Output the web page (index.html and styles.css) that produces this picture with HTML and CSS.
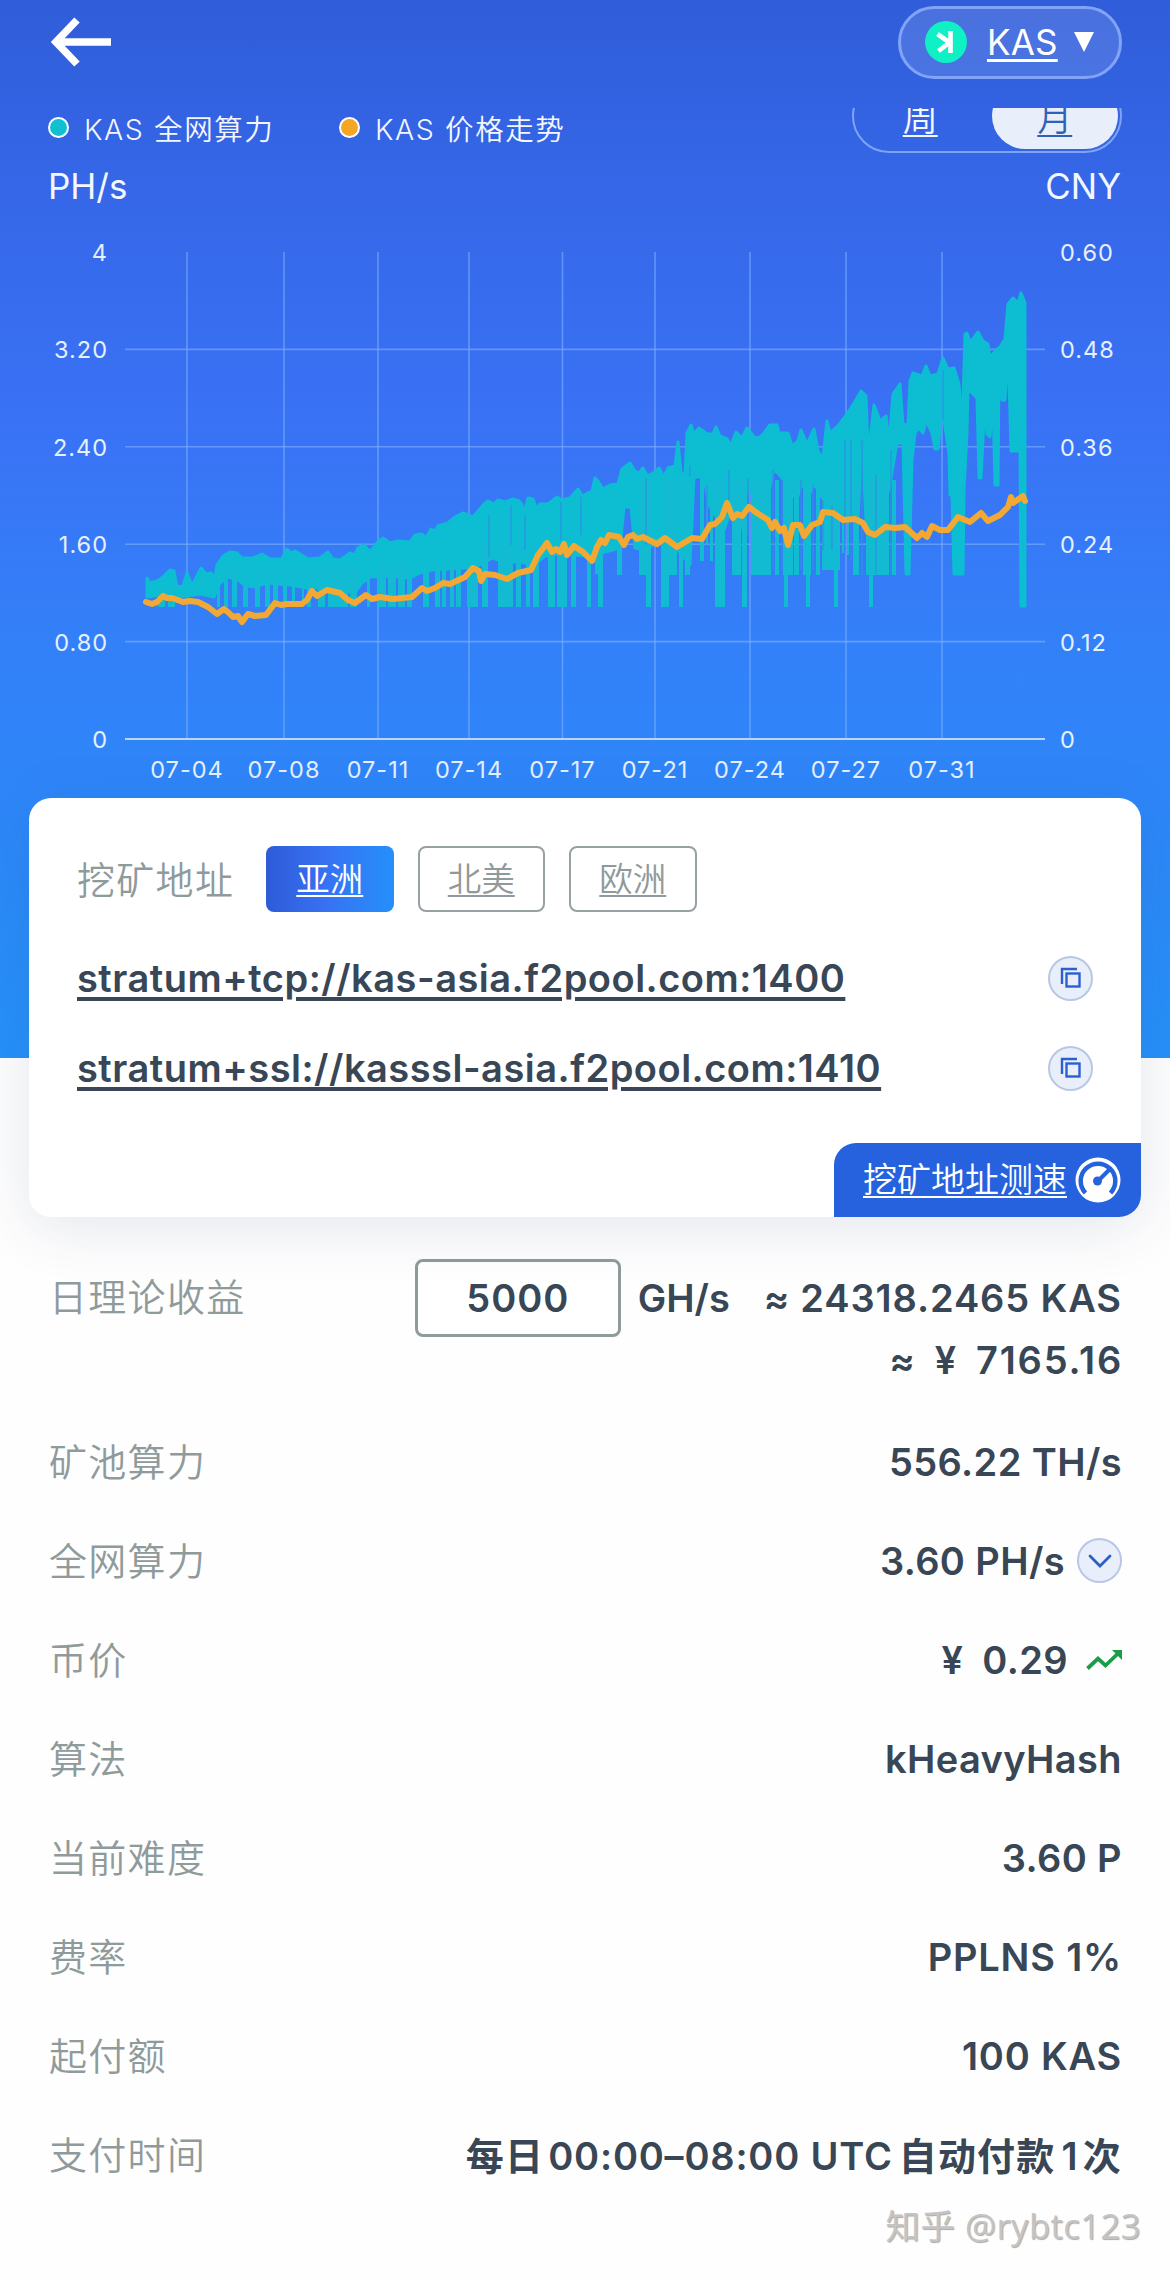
FILE: index.html
```html
<!DOCTYPE html>
<html lang="zh-CN">
<head>
  <meta charset="UTF-8">
  <meta name="viewport" content="width=device-width, initial-scale=1.0">
  <title>KAS 矿池</title>
  <link rel="stylesheet" href="styles.css">
</head>
<body>
  <header class="topbar">
    <svg class="back" width="62" height="50" viewBox="0 0 62 50" fill="none" stroke="#fff" stroke-width="7.5">
      <path d="M61 25H7M27 3L6 25l21 22"/>
    </svg>
    <div class="coin-select">
      <svg width="42" height="42" viewBox="0 0 42 42">
        <circle cx="21" cy="21" r="21" fill="#0ff0c4"/>
        <path d="M25.5 10v22M12.5 13l12 8.500-11 8.500" fill="none" stroke="#fff" stroke-width="4.600"/>
      </svg>
      <a class="coin-name">KAS</a>
      <span class="caret"></span>
    </div>
  </header>

  <div class="legend-row">
    <div class="legend"><span class="dot teal"></span>KAS 全网算力</div>
    <div class="legend"><span class="dot orange"></span>KAS 价格走势</div>
    <div class="period-clip">
      <div class="period">
        <a>周</a>
        <a class="active">月</a>
      </div>
    </div>
  </div>

  <div class="units"><span>PH/s</span><span>CNY</span></div>

  <svg class="chart" id="chart" width="1170" height="570" viewBox="0 220 1170 570">
    <g id="grid"></g>
    <path id="hashArea" class="hash-area"/>
    <path id="hashSpikes" class="hash-spikes"/>
    <path id="hashGaps" class="hash-gaps"/>
    <polyline id="price" class="price"/>
  </svg>

  <div class="card">
    <div class="regions">
      <span class="regions-label">挖矿地址</span>
      <a class="region active">亚洲</a>
      <a class="region">北美</a>
      <a class="region">欧洲</a>
    </div>
    <div class="address">
      <a>stratum+tcp://kas-asia.f2pool.com:1400</a>
      <span class="round"><svg width="22" height="22" viewBox="0 0 22 22" fill="none" stroke="#2c5fd0" stroke-width="2.400"><path d="M2 17V2h15"/><rect x="6.500" y="6.500" width="13" height="13"/></svg></span>
    </div>
    <div class="address">
      <a>stratum+ssl://kasssl-asia.f2pool.com:1410</a>
      <span class="round"><svg width="22" height="22" viewBox="0 0 22 22" fill="none" stroke="#2c5fd0" stroke-width="2.400"><path d="M2 17V2h15"/><rect x="6.500" y="6.500" width="13" height="13"/></svg></span>
    </div>
    <div class="speed">
      <a>挖矿地址测速</a>
      <svg width="46" height="46" viewBox="0 0 46 46">
        <circle cx="23" cy="23" r="22.500" fill="#fff"/>
        <path d="M10.500 36A17.300 17.300 0 1 1 35.500 36" fill="none" stroke="#2662de" stroke-width="4.500"/>
        <path d="M23 24L36 11" stroke="#2662de" stroke-width="4"/>
        <circle cx="22.500" cy="24" r="4.500" fill="#2662de"/>
      </svg>
    </div>
  </div>

  <div class="stats">
    <div class="stat income">
      <span class="label">日理论收益</span>
      <div class="calc">
        <div class="calc-line">
          <input type="text" value="5000">
          <span class="unit">GH/s</span>
          <span class="approx">≈</span>
          <span>24318.2465 KAS</span>
        </div>
        <div class="calc-line"><span>≈</span><span class="yen">¥</span><span class="cny">7165.16</span></div>
      </div>
    </div>
    <div class="stat"><span class="label">矿池算力</span><span class="value">556.22 TH/s</span></div>
    <div class="stat">
      <span class="label">全网算力</span>
      <span class="value">3.60 PH/s
        <span class="round expand"><svg width="24" height="14" viewBox="0 0 24 14" fill="none" stroke="#2c5fc4" stroke-width="2.800" stroke-linecap="round"><path d="M2 2l10 10L22 2"/></svg></span>
      </span>
    </div>
    <div class="stat">
      <span class="label">币价</span>
      <span class="value"><span class="yen">¥</span>0.29
        <svg class="trend" width="36" height="22" viewBox="0 0 36 22"><path d="M1.500 19.500L12 9.500l7.500 7L32 4.500" fill="none" stroke="#1a9c48" stroke-width="3.800"/><path d="M26 1h10v10z" fill="#1a9c48"/></svg>
      </span>
    </div>
    <div class="stat"><span class="label">算法</span><span class="value">kHeavyHash</span></div>
    <div class="stat"><span class="label">当前难度</span><span class="value">3.60 P</span></div>
    <div class="stat"><span class="label">费率</span><span class="value fee">PPLNS 1%</span></div>
    <div class="stat"><span class="label">起付额</span><span class="value fee">100 KAS</span></div>
    <div class="stat"><span class="label">支付时间</span><span class="pay">每日<span class="hours">00:00–08:00 UTC</span>自动付款<span class="times">1</span>次</span></div>
  </div>

  <footer>知乎 @rybtc123</footer>

  <script src="chart.js"></script>
</body>
</html>
```
FILE: styles.css
```css
* {
  box-sizing: border-box;
}

body {
  margin: 0;
  width: 1170px;
  height: 2280px;
  overflow: hidden;
  font-family: Inter, "Noto Sans CJK SC", sans-serif;
  color: #384655;
  background: #fefefe linear-gradient(180deg, #305dd9 0, #3567e8 190px, #3a72f5 420px, #3380f8 640px, #2591f9 1058px) no-repeat 0 0 / 100% 1058px;
}

a {
  text-decoration: underline;
  white-space: nowrap;
}

.topbar {
  display: flex;
  justify-content: space-between;
  align-items: center;
  height: 84px;
  padding: 0 48px 0 50px;
}

.coin-select {
  display: flex;
  align-items: center;
  width: 224px;
  height: 73px;
  padding-left: 24px;
  border: 3px solid #82a4f8;
  border-radius: 37px;
  background-color: rgba(255, 255, 255, 0.12);
  color: #fff;
}

.coin-name {
  margin-left: 20px;
  width: 72px;
  font-size: 35px;
  letter-spacing: 0.2px;
  text-decoration-thickness: 3px;
  text-underline-offset: 4px;
}

.caret {
  margin-left: 15px;
  border: 10px solid transparent;
  border-top: 20px solid #fff;
  border-bottom: 0;
}

.legend-row {
  display: flex;
  height: 45px;
  margin-top: 24px;
  padding: 0 48px;
  color: #f3f7ff;
  font-size: 28.5px;
}

.legend {
  display: flex;
  align-items: center;
  width: 291px;
  height: 39px;
  letter-spacing: 1.6px;
  font-weight: 350;
}

.dot {
  width: 21px;
  height: 21px;
  margin-right: 15px;
  border: 2px solid #fff;
  border-radius: 50%;
}

.dot.teal {
  background-color: #10bfd0;
}

.dot.orange {
  background-color: #f5a623;
}

.period-clip {
  display: flex;
  align-items: flex-end;
  margin-left: auto;
  overflow: hidden;
}

.period {
  display: flex;
  flex: none;
  width: 270px;
  height: 74px;
  padding: 2px;
  border: 2px solid #7fa3f7;
  border-radius: 37px;
}

.period a {
  width: 129px;
  height: 66px;
  font-size: 35px;
  line-height: 71px;
  font-weight: 350;
  text-align: center;
  text-decoration-thickness: 2px;
  text-underline-offset: 4px;
}

.period .active {
  width: 127px;
  margin-left: 7px;
  border-radius: 33px;
  background-color: #e9effa;
  color: #2d62b8;
}

.units {
  display: flex;
  justify-content: space-between;
  height: 67px;
  padding: 0 49px 0 48px;
  color: #f3f7ff;
  font-size: 35px;
  line-height: 67px;
}

.chart {
  display: block;
}

.chart text {
  fill: #e6f0ff;
  font-size: 23.5px;
  letter-spacing: 1px;
}

.grid-line {
  stroke: #7fb0ff;
  stroke-opacity: 0.6;
  stroke-width: 1.6;
}

.axis-line {
  stroke: #b9d4ff;
  stroke-width: 2;
}

.hash-area {
  fill: #0dbdd2;
  stroke: #0dbdd2;
  stroke-width: 3;
  stroke-linejoin: round;
}

.hash-spikes {
  fill: #12bad2;
}

.hash-gaps {
  fill: none;
  stroke: #2f92e4;
  stroke-width: 1.3;
}

.price {
  fill: none;
  stroke: #f2a832;
  stroke-width: 6;
  stroke-linejoin: round;
  stroke-linecap: round;
}

.card {
  position: relative;
  height: 419px;
  margin: 8px 29px 0;
  padding: 48px 48px 0;
  border-radius: 22px;
  background-color: #fff;
  box-shadow: 0 10px 60px rgba(40, 60, 110, 0.12);
}

.regions {
  display: flex;
  align-items: center;
  gap: 24px;
  height: 66px;
  margin-bottom: 21px;
}

.regions-label,
.label {
  padding-bottom: 4px;
  color: #8f9a9b;
  font-size: 38px;
  font-weight: 350;
  letter-spacing: 1.3px;
}

.regions-label {
  width: 165px;
}

.region {
  width: 127.5px;
  height: 66px;
  border: 2px solid #97a0a3;
  border-radius: 8px;
  color: #8f9a9b;
  font-size: 33.5px;
  font-weight: 350;
  line-height: 62px;
  text-align: center;
  text-decoration-thickness: 2px;
  text-underline-offset: 4px;
}

.region.active {
  border: 0;
  line-height: 66px;
  color: #fff;
  background: linear-gradient(90deg, #2e5bd8, #3773f3 50%, #2490fb);
}

.address {
  display: flex;
  justify-content: space-between;
  align-items: center;
  height: 90px;
  font-size: 38px;
  font-weight: 600;
  letter-spacing: 0.5px;
}

.address a {
  text-decoration-thickness: 4px;
  text-underline-offset: 5px;
}

.round {
  display: flex;
  justify-content: center;
  align-items: center;
  width: 45px;
  height: 45px;
  border: 2px solid #b9c7e6;
  border-radius: 50%;
  background-color: #e9effa;
}

.speed {
  position: absolute;
  right: 0;
  bottom: 0;
  display: flex;
  align-items: center;
  width: 307px;
  height: 74px;
  padding-left: 29px;
  border-radius: 22px 0 22px 0;
  background-color: #2662de;
  color: #fff;
  font-size: 34px;
  font-weight: 350;
}

.speed a {
  padding-bottom: 5px;
  margin-right: 8px;
  text-decoration-thickness: 2px;
  text-underline-offset: 4px;
}

.stats {
  margin-top: 42px;
  padding: 0 48px 0 49px;
  font-size: 38px;
  font-weight: 600;
  letter-spacing: 0.4px;
}

.stat {
  display: flex;
  justify-content: space-between;
  align-items: center;
  height: 99px;
}

.income {
  align-items: flex-start;
  height: 153px;
}

.income .label {
  line-height: 77px;
}

.calc {
  letter-spacing: 0.9px;
}

.calc-line {
  display: flex;
  justify-content: flex-end;
  align-items: center;
  height: 78px;
}

.calc-line + .calc-line {
  height: 45px;
}

.calc input {
  width: 206px;
  height: 78px;
  margin-right: 17px;
  border: 3px solid #8f9c9b;
  border-radius: 8px;
  background-color: #fff;
  color: inherit;
  font: inherit;
  letter-spacing: 1px;
  text-align: center;
}

.unit {
  width: 126px;
  letter-spacing: 0;
}

.approx {
  margin-right: 10px;
}

.cny {
  letter-spacing: 1.8px;
  margin-right: -1px;
}

.yen {
  margin: 0 19px;
}

.value {
  display: flex;
  align-items: center;
}

.fee {
  letter-spacing: 0.8px;
}

.expand {
  margin-left: 12px;
}

.trend {
  margin-left: 18px;
}

.pay {
  padding-bottom: 2px;
  letter-spacing: 1.2px;
}

.hours {
  margin: 0 6px 0 4px;
  letter-spacing: 0.8px;
}

.times {
  margin: 0 4px 0 6px;
}

footer {
  padding-right: 29px;
  color: #c4c4c4;
  font-family: "Open Sans", "Noto Sans CJK SC", sans-serif;
  font-size: 34.5px;
  line-height: 43px;
  letter-spacing: 0.5px;
  text-align: right;
  text-shadow: 1px 1px 1px #aaa;
}
```
FILE: chart.js
```js
const ns = 'http://www.w3.org/2000/svg';
const grid = document.getElementById('grid');

function line(x1, y1, x2, y2, cls) {
  const el = document.createElementNS(ns, 'line');
  el.setAttribute('x1', x1);
  el.setAttribute('y1', y1);
  el.setAttribute('x2', x2);
  el.setAttribute('y2', y2);
  el.setAttribute('class', cls);
  grid.appendChild(el);
}

function label(x, y, text, anchor) {
  const el = document.createElementNS(ns, 'text');
  el.setAttribute('x', x);
  el.setAttribute('y', y);
  el.setAttribute('text-anchor', anchor);
  el.textContent = text;
  grid.appendChild(el);
}

const left = ['4', '3.20', '2.40', '1.60', '0.80', '0'];
const right = ['0.60', '0.48', '0.36', '0.24', '0.12', '0'];
left.forEach((text, i) => {
  const y = 252 + i * 97.4;
  if (i > 0) line(125, y, 1045, y, i === 5 ? 'axis-line' : 'grid-line');
  label(108, y + 9, text, 'end');
  label(1060, y + 9, right[i], 'start');
});

const dates = [
  [187, '07-04'], [284, '07-08'], [378, '07-11'], [469, '07-14'], [562.5, '07-17'],
  [655, '07-21'], [750, '07-24'], [846, '07-27'], [942, '07-31'],
];
dates.forEach(([x, text]) => {
  line(x, 252, x, 738, 'grid-line');
  label(x, 778, text, 'middle');
});

// upper edge of the hashrate band
const high = '147,578 150,583 157,581 163,577 170,570 174,571 177,587 183,586 187,573 192,586 196,578 201,568 206,574 211,573 215,578 217,565 223,556 230,552 237,553 242,558 253,558 262,554 270,559 282,559 287,549 291,553 295,551 308,559 320,558 328,552 333,559 340,560 350,553 355,555 358,548 364,545 370,552 377,543 383,538 390,543 398,541 410,542 415,535 422,534 426,538 431,529 435,531 438,526 448,523 455,517 463,513 473,517 480,509 484,504 488,501 494,504 498,500 505,502 513,499 519,501 522,504 524,514 528,498 533,499 537,509 540,504 548,504 557,497 562,500 570,498 578,489 582,496 592,491 595,478 598,481 603,489 610,485 618,484 622,469 630,463 635,471 639,473 643,468 647,476 655,472 659,468 664,477 668,468 675,466 678,442 681,473 685,475 687,433 691,425 694,434 699,428 707,434 713,434 716,427 720,436 727,439 731,446 736,432 742,438 747,428 755,438 760,437 764,433 770,425 777,425 779,433 788,433 792,446 798,441 801,430 807,444 814,429 818,451 823,458 827,421 830,433 838,426 847,414 854,403 861,391 866,396 868,447 870,440 874,405 880,421 886,416 889,443 893,394 900,384 903,424 908,425 910,381 913,373 922,376 926,366 930,376 938,374 943,358 948,369 954,368 959,384 961,414 963,400 965,334 967,333 970,343 978,332 983,341 988,344 990,358 995,351 1000,347 1005,339 1008,304 1013,298 1018,303 1021,293 1025,303';
// lower edge, right to left
const low = '1025,606 1021,606 1020,451 1011,451 1009,380 1007,366 1005,400 1002,400 999,366 998,485 995,485 993,398 990,437 987,434 985,400 981,478 979,478 977,398 973,394 968,388 967,433 964,490 963,574 954,574 952,496 950,495 949,453 944,420 941,420 938,449 935,449 932,433 926,420 923,433 919,428 915,433 912,460 909,574 906,574 903,443 897,443 889,490 866,520 862,438 858,520 832,520 822,497 814,484 807,500 802,480 797,500 782,478 774,469 760,530 749,480 740,530 729,515 724,530 709,505 706,488 700,476 694,478 690,565 674,545 660,540 646,550 635,548 631,507 624,507 620,548 605,552 590,556 560,554 545,556 535,565 520,562 505,562 492,558 480,565 465,568 450,569 432,570 420,573 410,578 390,576 370,577 362,583 355,592 340,592 320,588 307,588 290,585 267,583 255,587 246,586 238,580 228,577 220,583 214,597 200,594 180,597 160,595 147,597';
document.getElementById('hashArea').setAttribute('d', 'M' + high + ' ' + low + 'Z');

// deep dips: start x, end x, bottom y
const dips = [
  [158, 165, 607], [168, 175, 607], [217, 220, 607], [224, 228, 607], [232, 237, 607], [243, 248, 607],
  [255, 260, 607], [265, 270, 607], [273, 278, 607], [283, 287, 607], [292, 295, 607], [302, 304, 607],
  [307, 311, 607], [318, 325, 607], [328, 348, 607], [350, 357, 607], [367, 370, 607], [378, 386, 607],
  [388, 396, 607], [398, 405, 607], [407, 412, 607], [423, 429, 607], [435, 440, 607], [442, 446, 607],
  [450, 454, 607], [456, 461, 607], [467, 478, 607], [482, 488, 607], [498, 513, 607], [516, 521, 607],
  [526, 530, 607], [533, 539, 607], [548, 555, 607], [557, 567, 607], [571, 576, 607], [587, 591, 607],
  [595, 600, 574], [598, 603, 607], [617, 622, 575], [639, 646, 575], [646, 651, 607], [661, 669, 607],
  [669, 677, 575], [679, 683, 607], [685, 690, 575], [700, 704, 561], [706, 708, 545], [710, 713, 561],
  [715, 725, 607], [732, 741, 575], [742, 747, 607], [751, 771, 575], [775, 779, 575], [783, 793, 575],
  [784, 788, 607], [794, 799, 575], [803, 811, 575], [806, 810, 607], [816, 820, 575], [822, 840, 570],
  [834, 838, 607], [842, 844, 553], [847, 849, 555], [853, 859, 575], [866, 889, 575], [869, 873, 607],
  [892, 896, 575], [905, 909, 575],
];

function dipTop(x) {
  if (x < 216) return 590;
  if (x < 480) return 566;
  return x < 620 ? 545 : 480;
}

document.getElementById('hashSpikes').setAttribute('d',
  dips.map(([x1, x2, y]) => `M${x1} ${dipTop(x1)}H${x2}V${y}H${x1}Z`).join(''));

const gaps = [
  [489, 515, 557], [511, 505, 545], [525, 515, 550], [561, 502, 540], [581, 497, 535], [646, 478, 545],
  [690, 465, 476], [707, 486, 530], [729, 470, 500], [748, 478, 535], [773, 470, 570], [782, 480, 570],
  [801, 480, 570], [813, 485, 570], [845, 440, 550], [851, 440, 560], [862, 440, 575], [876, 475, 574],
  [891, 450, 574], [943, 370, 420], [832, 505, 550], [823, 500, 550],
];
document.getElementById('hashGaps').setAttribute('d',
  gaps.map(([x, y1, y2]) => `M${x} ${y1}V${y2}`).join(''));

document.getElementById('price').setAttribute('points', '146,602 152,604 157,602 163,596 167,598 172,598 183,602 190,601 198,602 208,607 217,614 224,609 229,613 233,617 238,616 242,622 248,614 255,616 266,615 275,603 281,605 287,604 302,604 307,600 312,591 317,596 327,590 340,593 348,600 355,603 366,595 372,599 380,597 393,599 412,597 422,588 427,591 435,588 443,583 450,584 465,577 473,568 479,571 481,581 485,574 495,575 507,579 518,573 531,570 538,555 547,543 552,552 556,549 560,552 564,544 567,555 574,546 583,552 592,561 597,547 601,540 605,543 609,535 619,537 624,545 628,537 633,535 637,539 643,537 657,544 665,538 677,547 692,538 702,539 710,525 715,524 722,517 727,503 733,518 737,514 742,516 749,507 757,513 768,520 772,528 775,522 780,531 784,528 788,545 793,525 800,525 804,536 812,525 820,522 823,512 833,513 843,520 855,519 863,523 868,532 875,535 885,527 895,528 905,527 917,538 922,533 927,537 932,526 940,530 948,530 958,517 970,522 981,513 988,521 1000,515 1008,507 1011,497 1013,503 1023,496 1025,501');
```
